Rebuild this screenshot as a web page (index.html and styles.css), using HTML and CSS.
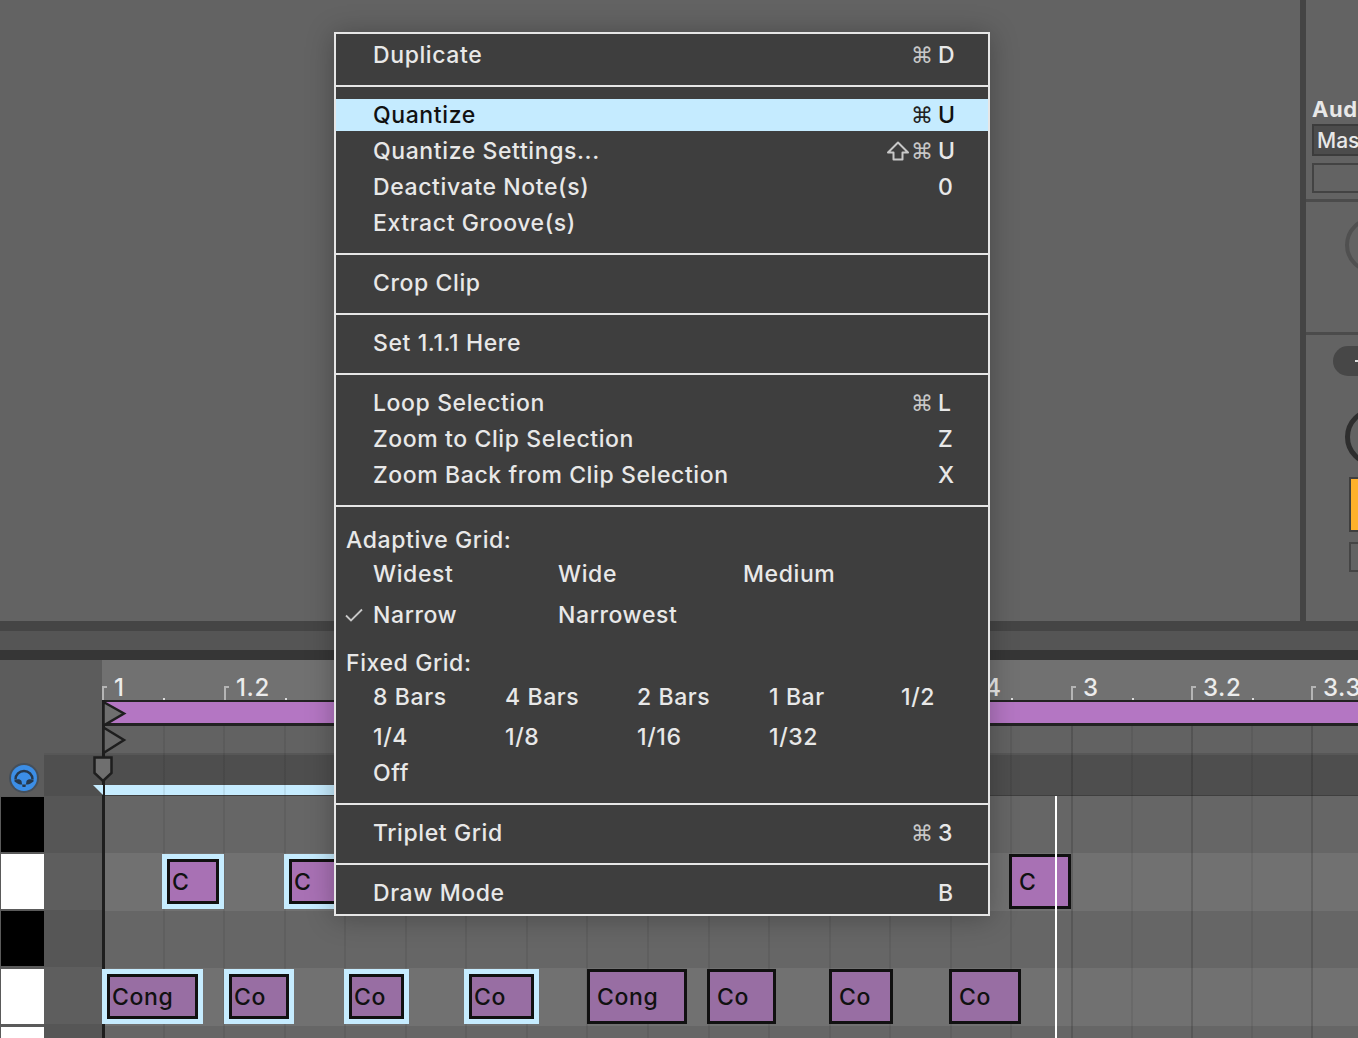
FILE: index.html
```html
<!DOCTYPE html>
<html lang="en">
<head>
    <meta charset="UTF-8">
    <meta name="viewport" content="width=device-width, initial-scale=1.0">
    <title>Clip Editor Context Menu</title>
    <link rel="stylesheet" href="styles.css">
</head>
<body>
    <div class="top-panel">
        <div class="top-main"></div>
        <div class="side-panel">
            <div class="side-section side-audio">
                <div class="side-title">Aud</div>
                <div class="side-select">Mas</div>
                <div class="side-empty"></div>
            </div>
            <div class="side-section side-knob">
                <div class="knob knob-light"></div>
            </div>
            <div class="side-section side-send">
                <div class="pill"><span class="pill-mark"></span></div>
                <div class="knob knob-dark"></div>
                <div class="orange-box"></div>
                <div class="small-box"></div>
            </div>
        </div>
    </div>

    <div class="strip strip-a"></div>
    <div class="strip strip-b"></div>
    <div class="strip strip-c"></div>

    <div class="editor">
        <div class="head-left"></div>

        <div class="ruler">
            <div class="tick" style="left: 0">1</div>
            <div class="tick" style="left: 122px">1.2</div>
            <div class="tick" style="left: 848px">2.4</div>
            <div class="tick" style="left: 969px">3</div>
            <div class="tick" style="left: 1089px">3.2</div>
            <div class="tick" style="left: 1209px">3.3</div>
            <span class="dot" style="left: 61px"></span>
            <span class="dot" style="left: 183px"></span>
            <span class="dot" style="left: 909px"></span>
            <span class="dot" style="left: 1030px"></span>
            <span class="dot" style="left: 1150px"></span>
        </div>

        <div class="loop-row">
            <div class="loop-bar"></div>
        </div>

        <div class="icon-cell">
            <svg class="headphones" width="32" height="32" viewBox="0 0 32 32">
                <circle cx="16" cy="16" r="15" fill="#454f5a"/>
                <circle cx="16" cy="16" r="13" fill="#3c8ee6"/>
                <path d="M7.500 17.500a8.500 8.500 0 1 1 17 0" fill="none" stroke="#26384c" stroke-width="2.500"/>
                <path d="M6.500 18c3-1.500 6-1 7 1l1 6h3l1-6c1-2 4-2.500 7-1v1.500c-2 1-4 3-6 3h-7c-2 0-4-2-6-3z" fill="#26384c"/>
            </svg>
        </div>
        <div class="shade-cell"></div>
        <div class="marker-row">
            <div class="start-strip"></div>
        </div>

        <div class="keys">
            <div class="key key-black"></div>
            <div class="key key-white"></div>
            <div class="key key-black"></div>
            <div class="key key-white key-gap"></div>
            <div class="key key-white key-gap"></div>
        </div>
        <div class="key-shade">
            <div class="shade-lane"></div>
            <div class="shade-lane shade-light"></div>
            <div class="shade-lane"></div>
            <div class="shade-lane shade-light"></div>
            <div class="shade-lane"></div>
        </div>
        <div class="lanes">
            <div class="lane"></div>
            <div class="lane lane-light"></div>
            <div class="lane"></div>
            <div class="lane lane-light"></div>
            <div class="lane lane-end"></div>
        </div>

        <div class="grid-lines">
            <div class="grid-part grid-first"></div>
            <div class="grid-part grid-second"></div>
        </div>

        <div class="playhead"></div>

        <div class="notes">
            <div class="note note-high sel" style="left: 60px; top: 58px; width: 62px">C</div>
            <div class="note note-high sel" style="left: 182px; top: 58px; width: 62px">C</div>
            <div class="note note-high" style="left: 907px; top: 58px; width: 62px">C</div>
            <div class="note sel" style="left: 0; top: 173px; width: 101px">Cong</div>
            <div class="note sel" style="left: 122px; top: 173px; width: 70px">Co</div>
            <div class="note sel" style="left: 242px; top: 173px; width: 65px">Co</div>
            <div class="note sel" style="left: 362px; top: 173px; width: 75px">Co</div>
            <div class="note" style="left: 485px; top: 173px; width: 100px">Cong</div>
            <div class="note" style="left: 605px; top: 173px; width: 69px">Co</div>
            <div class="note" style="left: 727px; top: 173px; width: 64px">Co</div>
            <div class="note" style="left: 847px; top: 173px; width: 72px">Co</div>
            <div class="insert-line"></div>
        </div>

        <svg class="markers" width="40" height="100" viewBox="0 0 40 100">
            <path d="M13.500 2L34 13.500L13.500 25.500Z" fill="#6f6f6f" stroke="#1e1e1e" stroke-width="2.500"/>
            <path d="M13.500 27.500L34 40L13.500 53Z" fill="#686868" stroke="#1e1e1e" stroke-width="2.500"/>
            <path d="M4.500 57.500H21.500V73L13 81L4.500 73Z" fill="#6f6f6f" stroke="#1e1e1e" stroke-width="2.500"/>
            <path d="M3 85H13V95Z" fill="#c6ecff"/>
        </svg>
    </div>

    <div class="menu">
        <div class="menu-section section-first">
            <div class="item">Duplicate<span class="shortcut"><span class="cmd">⌘</span><span class="key-letter">D</span></span></div>
        </div>
        <div class="menu-section">
            <div class="item item-active">Quantize<span class="shortcut"><span class="cmd">⌘</span><span class="key-letter">U</span></span></div>
            <div class="item">Quantize Settings...<span class="shortcut">
                <svg class="shift" width="24" height="22" viewBox="0 0 24 22">
                    <path d="M12 2.500L22 12.500H16.500V19.500H7.500V12.500H2Z" fill="none" stroke="#c8c8c8" stroke-width="2" stroke-linejoin="round"/>
                </svg>
                <span class="cmd">⌘</span><span class="key-letter">U</span></span></div>
            <div class="item">Deactivate Note(s)<span class="shortcut"><span class="key-letter">0</span></span></div>
            <div class="item">Extract Groove(s)</div>
        </div>
        <div class="menu-section">
            <div class="item">Crop Clip</div>
        </div>
        <div class="menu-section">
            <div class="item">Set 1.1.1 Here</div>
        </div>
        <div class="menu-section">
            <div class="item">Loop Selection<span class="shortcut"><span class="cmd">⌘</span><span class="key-letter">L</span></span></div>
            <div class="item">Zoom to Clip Selection<span class="shortcut"><span class="key-letter">Z</span></span></div>
            <div class="item">Zoom Back from Clip Selection<span class="shortcut"><span class="key-letter">X</span></span></div>
        </div>
        <div class="menu-section section-grid">
            <div class="grid-label">Adaptive Grid:</div>
            <div class="options options-adaptive">
                <div class="option">Widest</div>
                <div class="option">Wide</div>
                <div class="option">Medium</div>
                <div class="option">
                    <svg class="check" width="20" height="14" viewBox="0 0 20 14">
                        <path d="M2 7.500L7 12.500L18 1.500" fill="none" stroke="#c8c8c8" stroke-width="1.800"/>
                    </svg>
                    Narrow
                </div>
                <div class="option">Narrowest</div>
            </div>
            <div class="grid-label label-fixed">Fixed Grid:</div>
            <div class="options options-fixed">
                <div class="option">8 Bars</div>
                <div class="option">4 Bars</div>
                <div class="option">2 Bars</div>
                <div class="option">1 Bar</div>
                <div class="option">1/2</div>
                <div class="option">1/4</div>
                <div class="option">1/8</div>
                <div class="option">1/16</div>
                <div class="option">1/32</div>
                <div class="option option-off">Off</div>
            </div>
        </div>
        <div class="menu-section">
            <div class="item">Triplet Grid<span class="shortcut"><span class="cmd">⌘</span><span class="key-letter">3</span></span></div>
        </div>
        <div class="menu-section section-last">
            <div class="item">Draw Mode<span class="shortcut"><span class="key-letter">B</span></span></div>
        </div>
    </div>
</body>
</html>
```

FILE: styles.css
```css
body {
    margin: 0;
    height: 1038px;
    overflow: hidden;
    position: relative;
    background-color: #616161;
    font-family: Inter, "Noto Sans", sans-serif;
    font-size: 23px;
    font-weight: 500;
    letter-spacing: 0.6px;
    color: #e8e8e8;
}

.top-panel {
    display: flex;
    height: 621px;
    background-color: #636363;
}

.top-main {
    flex: 1;
}

.side-panel {
    width: 52px;
    border-left: 6px solid #444;
    overflow: hidden;
    font-size: 22px;
}

.side-section {
    box-sizing: border-box;
    border-bottom: 3px solid #4b4b4b;
}

.side-audio {
    height: 202px;
    padding: 96px 0 0 6px;
}

.side-title {
    height: 26px;
    line-height: 26px;
    font-weight: 700;
    white-space: nowrap;
}

.side-select {
    box-sizing: border-box;
    width: 100px;
    height: 32px;
    line-height: 29px;
    padding-left: 3px;
    margin-top: 2px;
    font-size: 21px;
    letter-spacing: 0;
    background-color: #4c4c4c;
    border: 2px solid #3c3c3c;
}

.side-empty {
    box-sizing: border-box;
    width: 100px;
    height: 30px;
    margin-top: 7px;
    border: 2px solid #434343;
}

.side-knob {
    height: 133px;
    padding: 15px 0 0 39px;
}

.knob {
    box-sizing: border-box;
    border-radius: 50%;
}

.knob-light {
    width: 56px;
    height: 56px;
    border: 4px solid #505050;
}

.side-send {
    border-bottom: none;
    padding-top: 11px;
}

.pill {
    display: flex;
    align-items: center;
    box-sizing: border-box;
    width: 60px;
    height: 30px;
    margin-left: 27px;
    padding-left: 22px;
    border-radius: 15px;
    background-color: #474747;
}

.pill-mark {
    width: 8px;
    height: 2px;
    background-color: #ddd;
}

.knob-dark {
    width: 58px;
    height: 58px;
    margin: 32px 0 0 39px;
    border: 5px solid #2e2e2e;
}

.orange-box {
    box-sizing: border-box;
    width: 60px;
    height: 55px;
    margin: 11px 0 0 43px;
    background-color: #ffb12c;
    border: 2px solid #3f3f3f;
}

.small-box {
    box-sizing: border-box;
    width: 60px;
    height: 30px;
    margin: 10px 0 0 43px;
    border: 2px solid #454545;
}

.strip-a {
    height: 10px;
    background-color: #454545;
}

.strip-b {
    height: 19px;
    background-color: #555;
}

.strip-c {
    height: 10px;
    background-color: #363636;
}

.editor {
    position: relative;
    height: 378px;
    display: grid;
    grid-template-columns: 44px 58px 1fr;
    grid-template-rows: 40px 53px 43px 1fr;
    background-color: #5b5b5b;
}

.head-left {
    grid-area: 1 / 1 / 3 / 3;
    background-color: #5c5c5c;
}

.ruler {
    grid-area: 1 / 3;
    position: relative;
    background-color: #717171;
}

.tick {
    position: absolute;
    top: 12px;
    height: 28px;
    padding-left: 12px;
    font-size: 24px;
    line-height: 32px;
    color: #ececec;
}

.tick::before {
    content: "";
    position: absolute;
    left: 0;
    bottom: 0;
    width: 3px;
    height: 12px;
    border-left: 2px solid #b5b5b5;
    border-top: 2px solid #b5b5b5;
}

.dot {
    position: absolute;
    bottom: 0;
    width: 2px;
    height: 2px;
    background-color: #ddd;
}

.loop-row {
    grid-area: 2 / 3;
    background-color: #626262;
}

.loop-bar {
    box-sizing: border-box;
    height: 26px;
    background-color: #b476c3;
    border-top: 2px solid #222;
    border-bottom: 3px solid #222;
}

.icon-cell {
    grid-area: 3 / 1;
    display: flex;
    align-items: flex-end;
    padding: 0 0 2px 8px;
    background-color: #5c5c5c;
}

.shade-cell {
    grid-area: 3 / 2;
    background-color: #4f4f4f;
    border-top: 2px solid #575757;
}

.marker-row {
    grid-area: 3 / 3;
    box-sizing: border-box;
    display: flex;
    align-items: flex-end;
    background-color: #4e4e4e;
    border-top: 2px solid #575757;
    border-bottom: 1px solid #3f3f3f;
}

.start-strip {
    width: 300px;
    height: 10px;
    background-color: #c6ecff;
}

.keys {
    grid-area: 4 / 1;
    display: flex;
    flex-direction: column;
    gap: 2px;
    padding: 1px 0 0 1px;
    background-color: #5a5a5a;
    overflow: hidden;
}

.key {
    flex-shrink: 0;
    height: 55px;
}

.key-black {
    background-color: #000;
}

.key-white {
    background-color: #fff;
}

.key-gap {
    margin-top: 1px;
}

.key-shade {
    grid-area: 4 / 2;
}

.shade-lane {
    height: 57px;
    background-color: #565656;
}

.shade-light {
    background-color: #5e5e5e;
}

.lanes {
    grid-area: 4 / 3;
}

.lane {
    height: 57px;
    background-color: #666;
}

.lane-light {
    height: 58px;
    background-color: #717171;
}

.lane-end {
    height: 13px;
}

.grid-lines {
    grid-area: 2 / 3 / 5 / 4;
    display: flex;
    margin-top: 26px;
}

.grid-part {
    height: 100%;
}

.grid-first {
    flex: 0 0 969px;
    background-image: repeating-linear-gradient(to right, rgba(0, 0, 0, 0.07) 0, rgba(0, 0, 0, 0.07) 2px, transparent 2px, transparent 60.56px);
}

.grid-second {
    flex: 1;
    background-image: repeating-linear-gradient(to right, rgba(0, 0, 0, 0.15) 0, rgba(0, 0, 0, 0.15) 2px, transparent 2px, transparent 60px, rgba(0, 0, 0, 0.07) 60px, rgba(0, 0, 0, 0.07) 62px, transparent 62px, transparent 120px);
}

.playhead {
    grid-area: 2 / 3 / 5 / 4;
    width: 3px;
    background-color: #1e1e1e;
}

.notes {
    grid-area: 4 / 3;
    position: relative;
}

.note {
    position: absolute;
    box-sizing: border-box;
    height: 55px;
    padding-left: 7px;
    line-height: 50px;
    color: #111;
    background-color: #986ea3;
    border: 3px solid #111;
}

.note-high {
    background-color: #a871b4;
}

.note.sel {
    padding-left: 5px;
    line-height: 46px;
    border: 5px solid #c6ecff;
    box-shadow: inset 0 0 0 3px #111;
}

.insert-line {
    position: absolute;
    left: 953px;
    top: 0;
    bottom: 0;
    width: 2px;
    background-color: #fff;
}

.markers {
    position: absolute;
    left: 90px;
    top: 40px;
}

/* context menu */
.menu {
    position: absolute;
    left: 334px;
    top: 32px;
    box-sizing: border-box;
    width: 656px;
    height: 884px;
    background-color: #3e3e3e;
    border: 2px solid #e6e6e6;
    box-shadow: 0 2px 26px rgba(0, 0, 0, 0.28);
}

.menu-section {
    padding: 12px 0 14px;
    border-top: 2px solid #e6e6e6;
}

.section-first {
    padding-top: 5px;
    border-top: none;
}

.section-last {
    padding-bottom: 5px;
}

.section-grid {
    padding-top: 17px;
}

.item {
    display: flex;
    justify-content: space-between;
    align-items: center;
    height: 32px;
    margin-bottom: 4px;
    padding: 0 34px 0 37px;
}

.menu-section .item:last-child {
    margin-bottom: 0;
}

.item-active {
    background-color: #c5ebff;
    color: #111;
}

.shortcut {
    display: flex;
    align-items: center;
}

.cmd {
    width: 27px;
    margin-left: -2px;
    font-family: "DejaVu Sans", sans-serif;
    font-size: 22px;
    letter-spacing: 0;
    color: #c8c8c8;
}

.item-active .cmd {
    color: #222;
}

.shift {
    margin-right: 3px;
}

.key-letter {
    width: 16px;
}

.grid-label {
    height: 32px;
    line-height: 32px;
    padding-left: 10px;
}

.label-fixed {
    margin-top: 16px;
}

.options {
    display: grid;
    margin-top: 2px;
    padding-left: 37px;
    align-items: start;
}

.options-adaptive {
    grid-template-columns: repeat(3, 185px);
    grid-template-rows: 32px 32px;
    row-gap: 9px;
}

.options-fixed {
    grid-template-columns: repeat(5, 132px);
    grid-template-rows: 36px 32px 32px;
    row-gap: 4px;
}

.option {
    position: relative;
    height: 32px;
    line-height: 32px;
}

.option-off {
    grid-column: 1;
    grid-row: 3;
}

.check {
    position: absolute;
    left: -29px;
    top: 9px;
}
```
